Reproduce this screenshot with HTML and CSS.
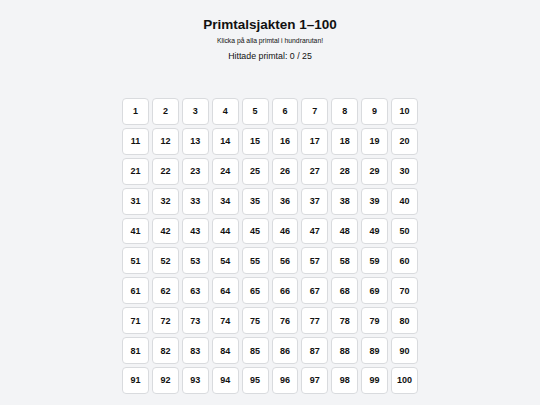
FILE: index.html
```html
<!DOCTYPE html>
<html lang="sv">
<head>
  <meta charset="UTF-8" />
  <title>Primtalsjakten 1–100</title>
  <meta name="viewport" content="width=device-width, initial-scale=1.0" />
  <link rel="stylesheet" href="styles.css">
</head>
<body>

<div class="game">
  <h1>Primtalsjakten 1–100</h1>
  <p class="intro">Klicka på alla primtal i hundrarutan!</p>
  <p class="score">Hittade primtal: <span id="found">0</span> / <span id="total">25</span></p>

  <!-- Hundraruta -->
  <div class="board" id="board"></div>
</div>

<script>
  const board = document.getElementById('board');
  let found = 0;

  function isPrime(n) {
    if (n < 2) return false;
    for (let i = 2; i * i <= n; i++) {
      if (n % i === 0) return false;
    }
    return true;
  }

  for (let n = 1; n <= 100; n++) {
    const cell = document.createElement('button');
    cell.className = 'cell';
    cell.textContent = n;
    cell.addEventListener('click', () => {
      if (cell.classList.contains('hit') || cell.classList.contains('miss')) return;
      if (isPrime(n)) {
        cell.classList.add('hit');
        found++;
        document.getElementById('found').innerText = found;
      } else {
        cell.classList.add('miss');
      }
    });
    board.appendChild(cell);
  }
</script>

</body>
</html>
```

FILE: styles.css
```css
:root {
  --bg: #f3f4f6;
  --white: #ffffff;
  --border: #d9dbde;
  --text: #111111;
}

* {
  box-sizing: border-box;
}

body {
  font-family: 'Liberation Sans', Arial, sans-serif;
  background: var(--bg);
  color: var(--text);
  margin: 0;
  padding: 0;
}

.game {
  display: flex;
  flex-direction: column;
  align-items: center;
  padding-top: 17px;
}

h1 {
  margin: 0;
  font-size: 13.5px;
  line-height: 16px;
  font-weight: 700;
}

.intro {
  margin: 4px 0 0;
  font-size: 6.8px;
  line-height: 8px;
}

.score {
  margin: 5.5px 0 0;
  font-size: 8.8px;
  line-height: 11px;
}

/* Board */
.board {
  margin-top: 36.5px;
  display: grid;
  grid-template-columns: repeat(10, 26.9px);
  grid-auto-rows: 26.9px;
  gap: 3px;
}

.cell {
  font-family: inherit;
  font-size: 9px;
  font-weight: 700;
  color: var(--text);
  background: var(--white);
  border: 1px solid var(--border);
  border-radius: 4px;
  padding: 0;
  cursor: pointer;
}

.cell:hover {
  background: #eef2f7;
}

.cell.hit {
  background: #22c55e;
  color: var(--white);
}

.cell.miss {
  background: #fca5a5;
}
```
